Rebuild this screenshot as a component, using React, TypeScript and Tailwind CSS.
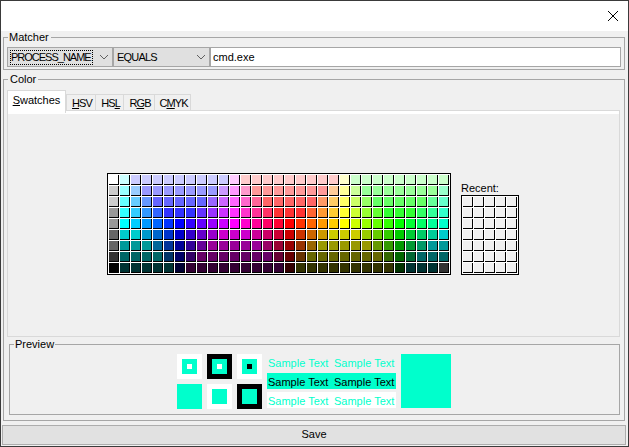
import React from "react";

const BASE = ["0FF","0CF","09F","06F","03F","00F","30F","60F","90F","C0F","F0F","F0C","F09","F06","F03","F00","F30","F60","F90","FC0","FF0","CF0","9F0","6F0","3F0","0F0","0F3","0F6","0F9","0FC"];
const FIRST = ["FFF","CCC","CCC","999","999","666","666","333","000"];
const LIMITS: [number, number][] = [[12,15],[9,15],[6,15],[3,15],[0,15],[0,12],[0,9],[0,6],[0,3]];

function swatchColors(): string[] {
  const out: string[] = [];
  LIMITS.forEach(([lo, hi], r) => {
    out.push("#" + FIRST[r]);
    BASE.forEach((b, c) => {
      if (r === 8 && c === 29) {
        out.push("#333");
        return;
      }
      const s = b
        .split("")
        .map((ch) => Math.min(hi, Math.max(lo, parseInt(ch, 16))).toString(16))
        .join("");
      out.push("#" + s);
    });
  });
  return out;
}

const SPRING = "bg-[#00ffcc]";

function Chevron() {
  return (
    <svg width="10" height="6" viewBox="0 0 10 6" className="shrink-0">
      <path d="M1 1 L5 5 L9 1" fill="none" stroke="#606060" strokeWidth="1" />
    </svg>
  );
}

function Tab({ pre, u, post, w }: { pre: string; u: string; post: string; w: string }) {
  return (
    <div className={`${w} h-[16px] border border-b-0 border-[#d9d9d9] bg-[#f0f0f0] flex items-center justify-center pl-[2px] pt-[1px] pb-[1px] leading-[14px] tracking-[-0.9px] -ml-[1px]`}>
      {pre}
      <span className="underline">{u}</span>
      {post}
    </div>
  );
}

function Square({ outer, mid, inner }: { outer: string; mid: boolean; inner?: string }) {
  return (
    <div className={`w-[25px] h-[25px] ${outer} flex items-center justify-center`}>
      {mid && (
        <div className={`w-[15px] h-[15px] ${SPRING} flex items-center justify-center`}>
          {inner && <div className={`w-[5px] h-[5px] ${inner}`} />}
        </div>
      )}
    </div>
  );
}

function SampleRow({ cls }: { cls: string }) {
  return (
    <div className={`h-[16px] flex items-center pt-[1px] leading-[14px] ${cls}`}>
      <span className="pl-[1px] w-[67px]">Sample Text</span>
      <span>Sample Text</span>
    </div>
  );
}

export default function App() {
  const colors = swatchColors();
  return (
    <div className="w-[629px] h-[447px] border border-[#3a3a3a] bg-[#f0f0f0] flex flex-col overflow-hidden text-[11px] text-black font-['Liberation_Sans',sans-serif]">
      <div className="h-[30px] shrink-0 bg-white flex items-center justify-end pr-[10px]">
        <svg width="10" height="10" viewBox="0 0 10 10">
          <path d="M0 0 L10 10 M10 0 L0 10" stroke="#000" strokeWidth="1" fill="none" />
        </svg>
      </div>

      <fieldset className="ml-[2px] mr-[3px] border border-[#a6a6a6] px-[3px] pt-[4px] pb-[2px] min-w-0">
        <legend className="ml-[1px] pl-[1px] pr-[2px] leading-[12px]">Matcher</legend>
        <div className="flex h-[20px]">
          <div className="w-[106px] border border-[#a6a6a6] bg-[#e0e0e0] flex items-center pl-[2px] pr-[3px] justify-between">
            <span className="border border-dotted border-black h-[15px] w-[83px] flex items-center leading-[13px] whitespace-nowrap tracking-[-1px]">
              PROCESS_NAME
            </span>
            <Chevron />
          </div>
          <div className="w-[97px] border border-[#a6a6a6] bg-[#e0e0e0] flex items-center pl-[3px] pr-[3px] justify-between">
            <span className="tracking-[-0.8px]">EQUALS</span>
            <Chevron />
          </div>
          <div className="flex-1 border border-[#a6a6a6] bg-white flex items-center pl-[2px]">cmd.exe</div>
        </div>
      </fieldset>

      <fieldset className="mt-[3px] ml-[2px] mr-[3px] border border-[#a6a6a6] pl-[3px] pr-[4px] pt-[6px] pb-[5px] min-w-0 flex-1 flex flex-col">
        <legend className="ml-[1px] pl-[2px] pr-[2px] leading-[12px]">Color</legend>
        <div className="h-[19px] flex items-end">
          <div className="w-[59px] h-[23px] relative z-10 border border-b-0 border-[#d9d9d9] bg-white flex items-start justify-center pt-[2px] leading-[14px] -mb-[3px]">
            <span>
              <span className="underline">S</span>watches
            </span>
          </div>
          <div className="h-[16px] flex pl-[1px]">
            <Tab pre="" u="H" post="SV" w="w-[30px]" />
            <Tab pre="HS" u="L" post="" w="w-[29px]" />
            <Tab pre="R" u="G" post="B" w="w-[32px]" />
            <Tab pre="C" u="M" post="YK" w="w-[37px]" />
          </div>
        </div>
        <div className="h-[227px] border border-[#d9d9d9] flex flex-col">
          <div className="h-[3px] bg-white shrink-0" />
          <div className="flex-1 flex items-center justify-center pb-[2px] pr-[1px]">
            <div className="flex items-end gap-[10px]">
              <div className="grid grid-cols-[repeat(31,10px)] gap-[1px] p-[1px] bg-white border border-black">
                {colors.map((c, i) => (
                  <div key={i} className="h-[10px] border-r border-b border-black" style={{ backgroundColor: c }} />
                ))}
              </div>
              <div className="flex flex-col">
                <div className="leading-[14px]">Recent:</div>
                <div className="grid grid-cols-[repeat(5,10px)] gap-[1px] p-[1px] bg-white border border-black">
                  {Array.from({ length: 35 }).map((_, i) => (
                    <div key={i} className="h-[10px] bg-[#f0f0f0] border-r border-b border-black" />
                  ))}
                </div>
              </div>
            </div>
          </div>
        </div>

        <fieldset className="mt-[1px] ml-[2px] border border-[#a6a6a6] pt-[4px] pb-[3px] min-w-0 flex-1">
          <legend className="ml-[4px] px-[1px] leading-[12px]">Preview</legend>
          <div className="flex justify-center items-start gap-[5px] pr-[1px]">
            <div className="grid grid-cols-[repeat(3,25px)] gap-[5px]">
              <Square outer="bg-white" mid inner="bg-white" />
              <Square outer="bg-black" mid inner="bg-white" />
              <Square outer="bg-white" mid inner="bg-black" />
              <Square outer={SPRING} mid={false} />
              <Square outer="bg-white" mid />
              <Square outer="bg-black" mid />
            </div>
            <div className="w-[129px] flex flex-col gap-[3px]">
              <SampleRow cls="text-[#00ffcc]" />
              <SampleRow cls="text-black bg-[#00ffcc]" />
              <SampleRow cls="text-[#00ffcc] bg-white" />
            </div>
            <div className={`w-[50px] h-[54px] ${SPRING}`} />
          </div>
        </fieldset>
      </fieldset>

      <div className="mt-[4px] mb-[1px] ml-[1px] mr-[2px] h-[20px] shrink-0 border border-[#adadad] bg-[#e1e1e1] flex items-center justify-center pb-[1px]">
        Save
      </div>
    </div>
  );
}
